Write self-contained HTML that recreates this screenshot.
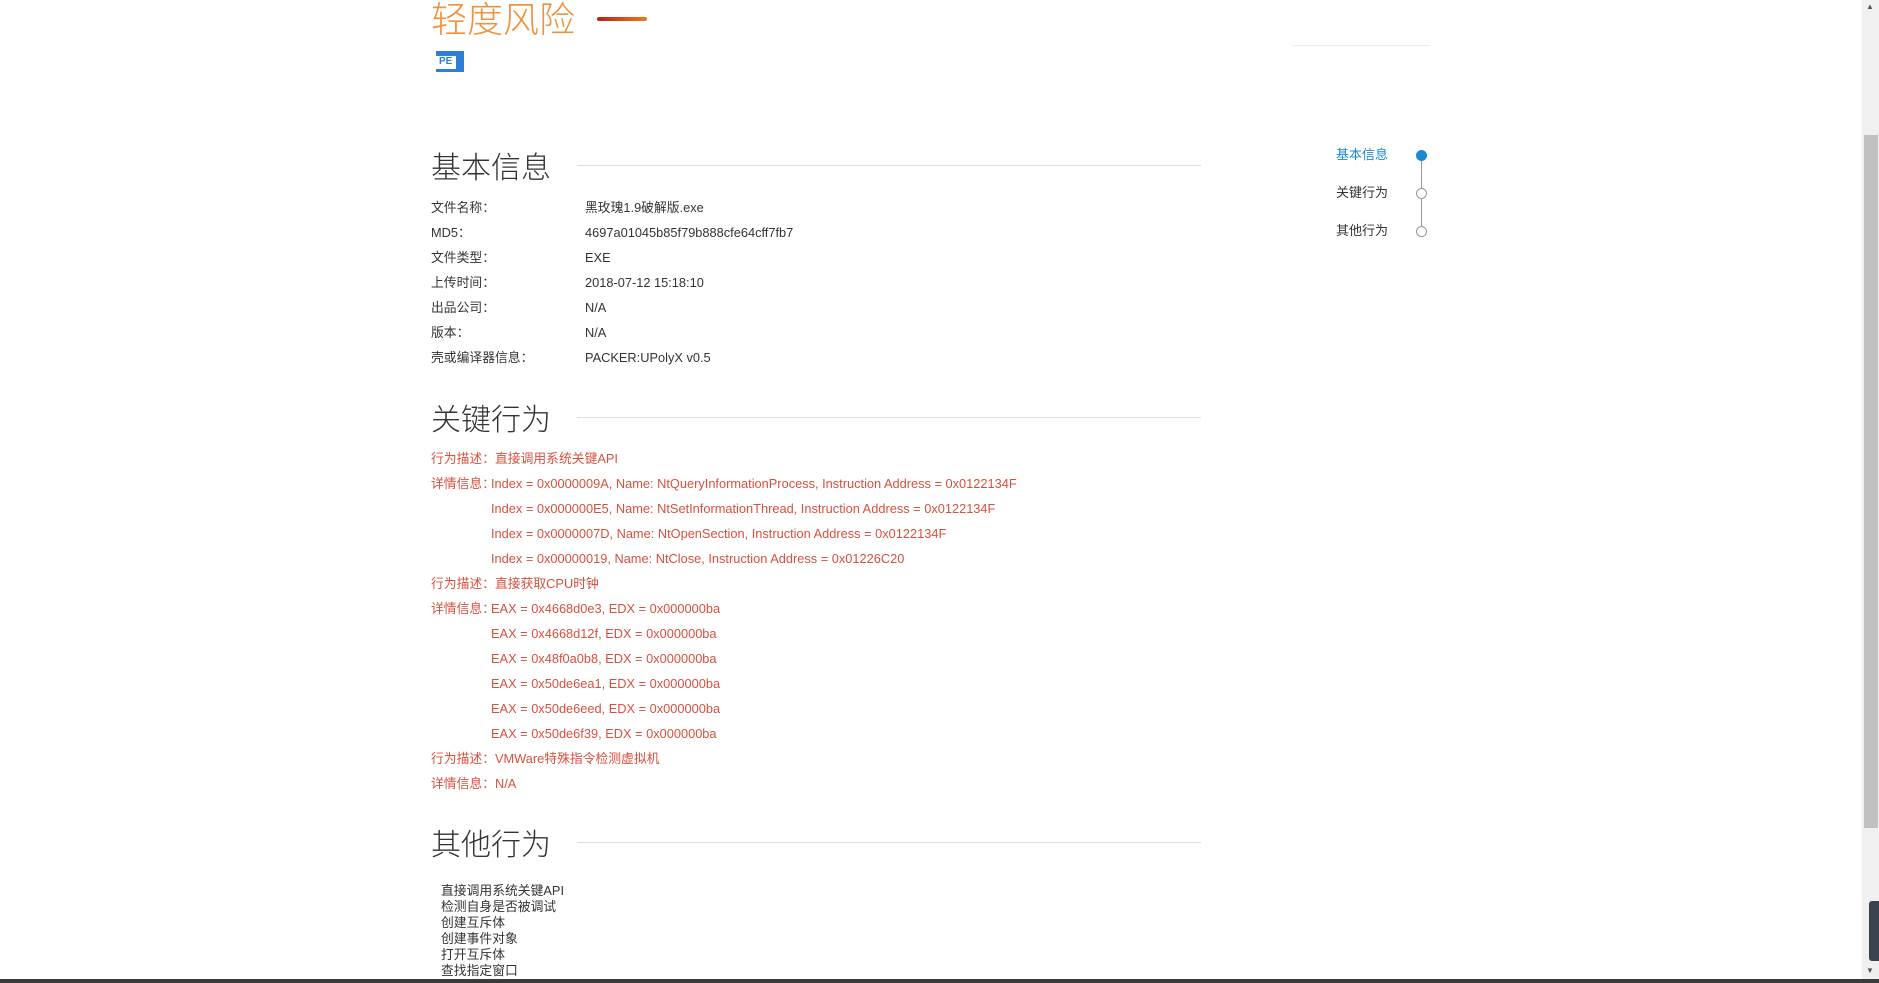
<!DOCTYPE html>
<html><head><meta charset="utf-8"><style>
*{margin:0;padding:0;box-sizing:border-box}
body{width:1879px;height:983px;overflow:hidden;background:#fff;position:relative;font-family:"Liberation Sans","Noto Sans CJK SC",sans-serif;color:#333}
.a{position:absolute;white-space:nowrap;line-height:1}
.t{font-size:12.8px;color:#333}
.r{font-size:12.8px;color:#d9503e}
.h{font-size:30px;color:#333;font-family:"Noto Sans CJK SC",sans-serif;font-weight:300}
.hl{position:absolute;left:577px;width:624px;height:1px;background:#ddd}
.o{font-size:12.8px;color:#333}
</style></head><body>
<div class="a" style="left:431px;top:-1px;font-size:36px;color:#f0913c;font-family:'Noto Sans CJK SC',sans-serif;font-weight:300">轻度风险</div>
<div class="a" style="left:597px;top:17px;width:50px;height:4px;border-radius:2px;background:linear-gradient(90deg,#b8201a,#f07a1a)"></div>
<div class="a" style="left:436px;top:51px;width:28px;height:21px;background:#2a80d4"></div>
<div class="a" style="left:436px;top:56px;width:20px;height:13px;background:#fff;font-size:10px;color:#2a80d4;font-weight:bold;padding-left:3px;padding-top:1px">PE</div>

<div class="a" style="left:1291px;top:45px;width:139px;height:1px;background:#eee"></div>
<div class="a" style="left:1336px;top:148px;font-size:13px;color:#1a8ad4">基本信息</div>
<div class="a" style="left:1336px;top:186px;font-size:13px;color:#333">关键行为</div>
<div class="a" style="left:1336px;top:224px;font-size:13px;color:#333">其他行为</div>
<div class="a" style="left:1421px;top:160px;width:1px;height:70px;background:#999"></div>
<div class="a" style="left:1416px;top:150px;width:11px;height:11px;border-radius:50%;background:#1a8ad4"></div>
<div class="a" style="left:1416px;top:188px;width:11px;height:11px;border-radius:50%;background:#fff;border:1px solid #999"></div>
<div class="a" style="left:1416px;top:226px;width:11px;height:11px;border-radius:50%;background:#fff;border:1px solid #999"></div>

<div class="a h" style="left:431px;top:150px">基本信息</div><div class="hl" style="top:165px"></div>
<div class="a t" style="left:431px;top:202px">文件名称：</div><div class="a t" style="left:585px;top:202px">黑玫瑰1.9破解版.exe</div>
<div class="a t" style="left:431px;top:227px">MD5：</div><div class="a t" style="left:585px;top:227px">4697a01045b85f79b888cfe64cff7fb7</div>
<div class="a t" style="left:431px;top:252px">文件类型：</div><div class="a t" style="left:585px;top:252px">EXE</div>
<div class="a t" style="left:431px;top:277px">上传时间：</div><div class="a t" style="left:585px;top:277px">2018-07-12 15:18:10</div>
<div class="a t" style="left:431px;top:302px">出品公司：</div><div class="a t" style="left:585px;top:302px">N/A</div>
<div class="a t" style="left:431px;top:327px">版本：</div><div class="a t" style="left:585px;top:327px">N/A</div>
<div class="a t" style="left:431px;top:352px">壳或编译器信息：</div><div class="a t" style="left:585px;top:352px">PACKER:UPolyX v0.5</div>

<div class="a h" style="left:431px;top:402px">关键行为</div><div class="hl" style="top:417px"></div>
<div class="a r" style="left:431px;top:453px">行为描述：直接调用系统关键API</div>
<div class="a r" style="left:431px;top:478px">详情信息：</div><div class="a r" style="left:491px;top:478px">Index = 0x0000009A, Name: NtQueryInformationProcess, Instruction Address = 0x0122134F</div>
<div class="a r" style="left:491px;top:503px">Index = 0x000000E5, Name: NtSetInformationThread, Instruction Address = 0x0122134F</div>
<div class="a r" style="left:491px;top:528px">Index = 0x0000007D, Name: NtOpenSection, Instruction Address = 0x0122134F</div>
<div class="a r" style="left:491px;top:553px">Index = 0x00000019, Name: NtClose, Instruction Address = 0x01226C20</div>
<div class="a r" style="left:431px;top:578px">行为描述：直接获取CPU时钟</div>
<div class="a r" style="left:431px;top:603px">详情信息：</div><div class="a r" style="left:491px;top:603px">EAX = 0x4668d0e3, EDX = 0x000000ba</div>
<div class="a r" style="left:491px;top:628px">EAX = 0x4668d12f, EDX = 0x000000ba</div>
<div class="a r" style="left:491px;top:653px">EAX = 0x48f0a0b8, EDX = 0x000000ba</div>
<div class="a r" style="left:491px;top:678px">EAX = 0x50de6ea1, EDX = 0x000000ba</div>
<div class="a r" style="left:491px;top:703px">EAX = 0x50de6eed, EDX = 0x000000ba</div>
<div class="a r" style="left:491px;top:728px">EAX = 0x50de6f39, EDX = 0x000000ba</div>
<div class="a r" style="left:431px;top:753px">行为描述：VMWare特殊指令检测虚拟机</div>
<div class="a r" style="left:431px;top:778px">详情信息：N/A</div>

<div class="a h" style="left:431px;top:827px">其他行为</div><div class="hl" style="top:842px"></div>
<div class="a o" style="left:441px;top:885px">直接调用系统关键API</div>
<div class="a o" style="left:441px;top:901px">检测自身是否被调试</div>
<div class="a o" style="left:441px;top:917px">创建互斥体</div>
<div class="a o" style="left:441px;top:933px">创建事件对象</div>
<div class="a o" style="left:441px;top:949px">打开互斥体</div>
<div class="a o" style="left:441px;top:965px">查找指定窗口</div>

<div class="a" style="left:1862px;top:0;width:17px;height:980px;background:#f0f0f0"></div>
<div class="a" style="left:1866px;top:3px;font-size:8px;color:#555">▲</div>
<div class="a" style="left:1864px;top:135px;width:14px;height:693px;background:#c1c1c1"></div>
<div class="a" style="left:1869px;top:901px;width:10px;height:60px;background:#3a4250;border-radius:3px 0 0 3px"></div>
<div class="a" style="left:1866px;top:967px;font-size:8px;color:#555">▼</div>
<div class="a" style="left:0;top:979px;width:1879px;height:4px;background:#3a3a3a"></div>
</body></html>
